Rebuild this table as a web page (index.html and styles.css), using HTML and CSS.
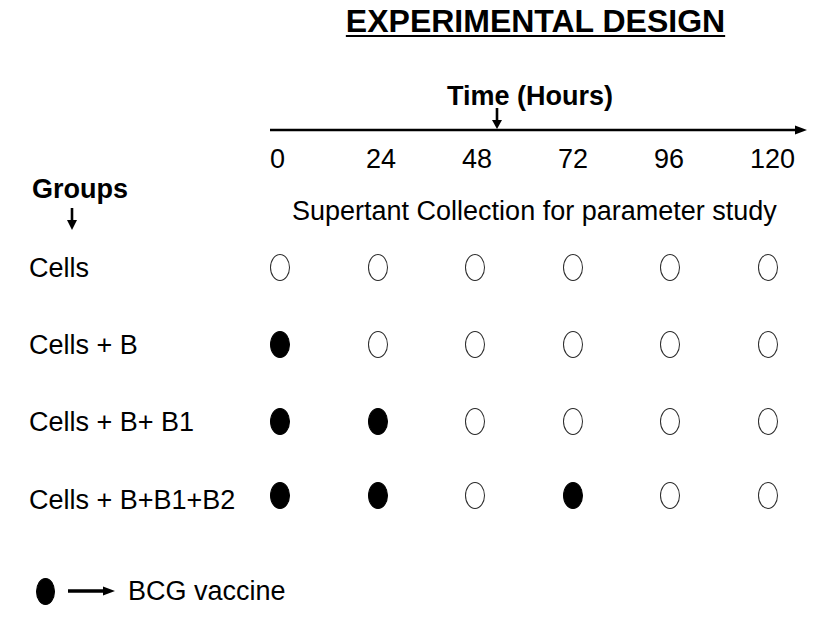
FILE: index.html
```html
<!DOCTYPE html>
<html lang="en">
<head>
<meta charset="utf-8">
<title>Experimental Design</title>
<link rel="stylesheet" href="styles.css">
</head>
<body>
<div class="page">
  <header class="title-row">
    <h1 class="title">EXPERIMENTAL DESIGN</h1>
  </header>

  <section class="timeline">
    <div class="time-label">Time (Hours)</div>
    <svg class="axis" width="540" height="34" viewBox="0 0 540 34" aria-hidden="true">
      <line x1="0" y1="23" x2="528" y2="23" stroke="#000" stroke-width="2.6"/>
      <polygon points="525,18.5 537,23 525,27.5" fill="#000"/>
      <line x1="227" y1="1" x2="227" y2="15" stroke="#000" stroke-width="2.6"/>
      <polygon points="222,13 232,13 227,22" fill="#000"/>
    </svg>
    <div class="ticks">
      <span>0</span><span>24</span><span>48</span><span>72</span><span>96</span><span>120</span>
    </div>
  </section>

  <section class="groups-row">
    <div class="groups-col">
      <div class="groups-label">Groups</div>
      <svg class="groups-arrow" width="14" height="24" viewBox="0 0 14 24" aria-hidden="true">
        <line x1="7" y1="1" x2="7" y2="15" stroke="#000" stroke-width="2.6"/>
        <polygon points="2,13 12,13 7,23" fill="#000"/>
      </svg>
    </div>
    <div class="collection">Supertant Collection for parameter study</div>
  </section>

  <section class="rows">
    <div class="row">
      <div class="label">Cells</div>
      <div class="dots">
        <span class="dot"></span><span class="dot"></span><span class="dot"></span>
        <span class="dot"></span><span class="dot"></span><span class="dot"></span>
      </div>
    </div>
    <div class="row">
      <div class="label">Cells + B</div>
      <div class="dots">
        <span class="dot filled"></span><span class="dot"></span><span class="dot"></span>
        <span class="dot"></span><span class="dot"></span><span class="dot"></span>
      </div>
    </div>
    <div class="row">
      <div class="label">Cells + B+ B1</div>
      <div class="dots">
        <span class="dot filled"></span><span class="dot filled"></span><span class="dot"></span>
        <span class="dot"></span><span class="dot"></span><span class="dot"></span>
      </div>
    </div>
    <div class="row row-last">
      <div class="label">Cells + B+B1+B2</div>
      <div class="dots">
        <span class="dot filled"></span><span class="dot filled"></span><span class="dot"></span>
        <span class="dot filled"></span><span class="dot"></span><span class="dot"></span>
      </div>
    </div>
  </section>

  <footer class="legend">
    <span class="dot filled legend-dot"></span>
    <svg class="legend-arrow" width="47" height="12" viewBox="0 0 47 12" aria-hidden="true">
      <line x1="0" y1="6" x2="38" y2="6" stroke="#000" stroke-width="3.4"/>
      <polygon points="35,1.5 47,6 35,10.5" fill="#000"/>
    </svg>
    <span class="legend-text">BCG vaccine</span>
  </footer>
</div>
</body>
</html>
```

FILE: styles.css
```css
html, body {
  margin: 0;
  padding: 0;
  background: #fff;
}

.page {
  width: 837px;
  height: 621px;
  overflow: hidden;
  font-family: "Liberation Sans", Arial, sans-serif;
  font-size: 27px;
  color: #000;
}

/* Title */
.title-row {
  height: 44px;
  padding-left: 270px;
  box-sizing: border-box;
}

.title {
  width: 531px;
  margin: 0;
  padding-top: 3px;
  font-size: 32px;
  line-height: 36px;
  font-weight: bold;
  text-align: center;
  white-space: nowrap;
  text-decoration: underline;
  text-decoration-thickness: 2px;
  text-underline-offset: 3px;
}

/* Timeline */
.timeline {
  padding-left: 270px;
}

.time-label {
  margin-top: 41px;
  padding-left: 177px;
  font-weight: bold;
  line-height: 22px;
  height: 22px;
  white-space: nowrap;
}

.axis {
  display: block;
}

.ticks {
  margin-top: 3px;
  display: grid;
  grid-template-columns: repeat(6, 96px);
  line-height: 30px;
  height: 30px;
}

/* Groups header row */
.groups-row {
  display: flex;
  height: 55px;
}

.groups-col {
  flex: 0 0 270px;
  padding-left: 32px;
  box-sizing: border-box;
}

.groups-label {
  font-weight: bold;
  line-height: 30px;
}

.groups-arrow {
  display: block;
  margin-top: 3px;
  margin-left: 33px;
}

.collection {
  margin-top: 22px;
  padding-left: 22px;
  line-height: 30px;
  white-space: nowrap;
}

/* Data rows */
.row {
  display: flex;
  align-items: center;
  height: 77px;
}

.label {
  flex: 0 0 270px;
  padding-left: 29px;
  box-sizing: border-box;
  line-height: 30px;
  white-space: nowrap;
}

.dots {
  flex: 0 0 auto;
  display: grid;
  grid-template-columns: repeat(6, 97.6px);
  align-items: center;
}

.dot {
  display: block;
  width: 20px;
  height: 27px;
  border-radius: 50%;
  border: 1.3px solid #2a2a2a;
  box-sizing: border-box;
  background: #fff;
}

.dot.filled {
  background: #000;
  border-color: #000;
}

.row-last .label {
  padding-top: 2px;
}

.row-last .dot {
  margin-bottom: 6px;
}

/* Legend */
.legend {
  display: flex;
  align-items: center;
  height: 30px;
  margin-top: 39px;
  padding-left: 36px;
}

.legend-dot {
  flex: 0 0 auto;
  width: 19px;
  height: 27px;
}

.legend-arrow {
  display: block;
  flex: 0 0 auto;
  margin-left: 13px;
}

.legend-text {
  margin-left: 13px;
  line-height: 30px;
  white-space: nowrap;
}
```
